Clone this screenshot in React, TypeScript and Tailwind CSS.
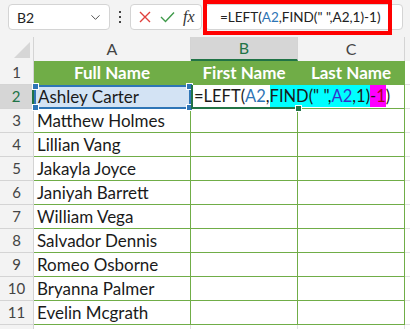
import { ChevronDown } from "lucide-react"

const names = [
  "Matthew Holmes",
  "Lillian Vang",
  "Jakayla Joyce",
  "Janiyah Barrett",
  "William Vega",
  "Salvador Dennis",
  "Romeo Osborne",
  "Bryanna Palmer",
  "Evelin Mcgrath",
]

function Corner({ className }: { className: string }) {
  return <div className={"absolute h-[5px] w-[5px] bg-[#2e75b6] border border-white box-content " + className} />
}

export default function App() {
  return (
    <div className="relative h-[329px] w-[410px] overflow-hidden bg-[#f3f3f3] font-['Lato',sans-serif] text-[#1a1a1a]">
      {/* formula bar */}
      <div className="flex h-[37px] items-start pl-[8px] pt-[4px]">
        <div className="flex h-[26px] w-[102px] items-center justify-between rounded-[4px] border border-[#d4d4d4] bg-white pl-[8px] pr-[6px]">
          <span className="text-[14px] text-[#222]">B2</span>
          <ChevronDown size={15} strokeWidth={1.5} className="text-[#444]" />
        </div>
        <div className="flex h-[26px] w-[20px] flex-col items-center justify-center gap-[3px]">
          <div className="h-[2px] w-[2px] bg-[#444]" />
          <div className="h-[2px] w-[2px] bg-[#444]" />
          <div className="h-[2px] w-[2px] bg-[#444]" />
        </div>
        <div className="flex h-[26px] w-[72px] items-center rounded-[4px] border border-[#d4d4d4] bg-white pl-[8px]">
          <svg width="12" height="12" viewBox="0 0 12 12" className="mr-[9px]">
            <path d="M1 1 L11 11 M11 1 L1 11" stroke="#e0403c" strokeWidth="1.4" />
          </svg>
          <svg width="15" height="12" viewBox="0 0 15 12" className="mr-[8px]">
            <path d="M1 6 L5.5 10.5 L14 1.5" stroke="#3f9a4a" strokeWidth="1.4" fill="none" />
          </svg>
          <span className="font-['Liberation_Serif',serif] text-[16px] italic text-[#333]">fx</span>
        </div>
        <div className="ml-[3px] flex h-[26px] w-[198px] items-center rounded-[4px] border border-[#d4d4d4] bg-white pl-[14px] text-[13.5px] text-[#222]">
          <span>=LEFT(</span>
          <span className="text-[#2e75b6]">A2</span>
          <span>,FIND(" ",A2,1)-1)</span>
        </div>
      </div>
      <div className="absolute left-[203px] top-0 h-[35px] w-[189px] border-[4px] border-[#ff0000]" />

      {/* column headers */}
      <div className="flex h-[24px] text-[16px] text-[#444]">
        <div className="relative w-[34px] border-r border-[#d4d4d4]">
          <svg width="16" height="16" viewBox="0 0 16 16" className="absolute bottom-[3px] right-[3px]">
            <polygon points="16,0 16,16 0,16" fill="#d6d6d6" />
          </svg>
        </div>
        <div className="flex w-[157px] items-center justify-center border-r border-[#d4d4d4]">A</div>
        <div className="flex w-[107px] items-center justify-center border-b-2 border-r border-[#217346] border-r-[#d4d4d4] bg-[#d6d6d6] text-[#217346]">B</div>
        <div className="flex w-[107px] items-center justify-center border-r border-[#d4d4d4]">C</div>
        <div className="flex-1" />
      </div>

      {/* row 1 */}
      <div className="flex h-[24px] text-[17px]">
        <div className="flex w-[34px] items-center justify-center border-b border-r border-[#d4d4d4] text-[15px] text-[#444]">1</div>
        <div className="flex w-[157px] items-center justify-center border-b border-r border-[#70ad47] bg-[#70ad47] font-bold text-white">Full Name</div>
        <div className="flex w-[107px] items-center justify-center border-b border-r border-[#70ad47] bg-[#70ad47] font-bold text-white">First Name</div>
        <div className="flex w-[107px] items-center justify-center border-b border-r border-[#70ad47] bg-[#70ad47] font-bold text-white">Last Name</div>
        <div className="flex-1 border-b border-[#e1e1e1] bg-white" />
      </div>

      {/* row 2 (editing) */}
      <div className="flex h-[24px] text-[17px]">
        <div className="flex w-[34px] items-center justify-center border-b border-r-2 border-[#d4d4d4] border-r-[#217346] bg-[#d6d6d6] text-[15px] text-[#217346]">2</div>
        <div className="relative flex w-[157px] items-center border-2 border-[#2e75b6] bg-[#d3e3f4] pl-[2px]">
          Ashley Carter
          <Corner className="-left-[4px] -top-[4px]" />
          <Corner className="-right-[4px] -top-[4px]" />
          <Corner className="-bottom-[4px] -left-[4px]" />
          <Corner className="-bottom-[4px] -right-[4px]" />
        </div>
        <div className="relative z-10 flex w-[107px] items-stretch whitespace-nowrap border-b-2 border-l-2 border-[#217346] bg-white pl-[1px] text-[16.5px] leading-[22px]">
          <span>=LEFT(</span>
          <span className="text-[#2e75b6]">A2</span>
          <span>,</span>
          <span className="bg-[#00ffff]">FIND(" ",<span className="text-[#3333cc]">A2</span>,1)</span>
          <span className="bg-[#ff00ff]">-<span className="text-[#b00020]">1</span></span>
          <span>)</span>
          <span className="ml-[1px] mt-[2px] h-[18px] w-[1px] bg-black" />
          <div className="absolute -bottom-[5px] -right-[4px] h-[5px] w-[5px] border border-white bg-[#217346] box-content" />
        </div>
        <div className="w-[107px] border-b border-r border-[#70ad47] bg-white" />
        <div className="flex-1 border-b border-[#e1e1e1] bg-white" />
      </div>

      {names.map((name, i) => (
        <div key={name} className="flex h-[24px] text-[17px]">
          <div className="flex w-[34px] items-center justify-center border-b border-r border-[#d4d4d4] text-[15px] text-[#444]">{i + 3}</div>
          <div className="flex w-[157px] items-center border-b border-r border-[#70ad47] bg-white pl-[3px]">{name}</div>
          <div className="w-[107px] border-b border-r border-[#70ad47] bg-white" />
          <div className="w-[107px] border-b border-r border-[#70ad47] bg-white" />
          <div className="flex-1 border-b border-[#e1e1e1] bg-white" />
        </div>
      ))}

      {/* row 12, only its top edge is in view */}
      <div className="flex h-[24px]">
        <div className="w-[34px] border-r border-[#d4d4d4]" />
        <div className="w-[157px] border-r border-[#e1e1e1] bg-white" />
        <div className="w-[107px] border-r border-[#e1e1e1] bg-white" />
        <div className="w-[107px] border-r border-[#e1e1e1] bg-white" />
        <div className="flex-1 bg-white" />
      </div>
    </div>
  )
}
